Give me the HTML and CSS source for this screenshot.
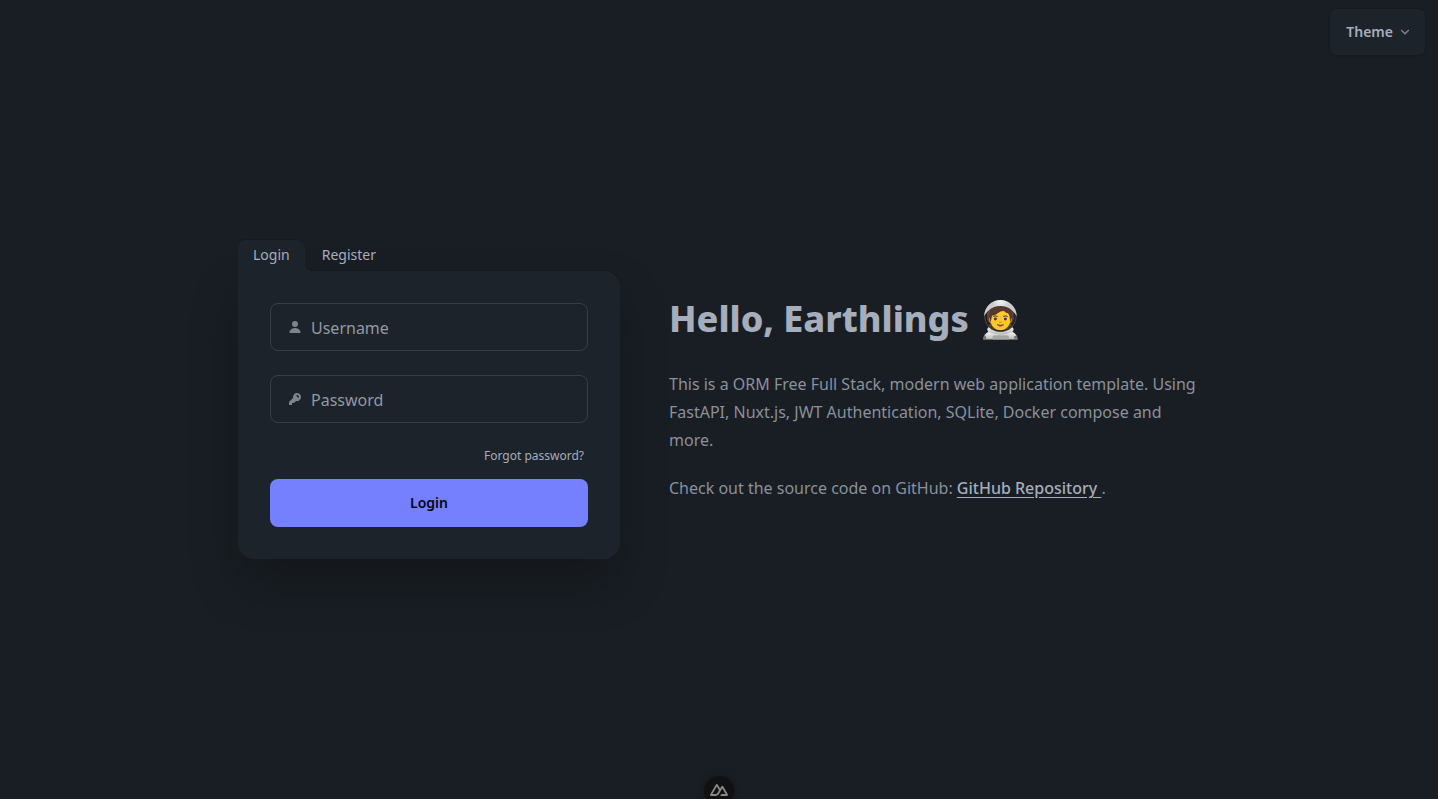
FILE: index.html
```html
<!DOCTYPE html>
<html lang="en">
<head>
<meta charset="utf-8">
<meta name="viewport" content="width=device-width, initial-scale=1">
<title>Login</title>
<link rel="stylesheet" href="styles.css">
</head>
<body>
<header class="topbar">
  <button class="theme-button" type="button">Theme
    <svg class="chevron" viewBox="0 0 12 12" aria-hidden="true"><path d="M2.200 4 6 7.800 9.800 4"/></svg>
  </button>
</header>
<main class="hero">
  <section class="auth">
    <nav class="tabs" role="tablist">
      <button class="tab tab-active" type="button" role="tab" aria-selected="true">Login</button>
      <button class="tab" type="button" role="tab" aria-selected="false">Register</button>
    </nav>
    <form class="card">
      <label class="field">
        <svg class="field-icon" viewBox="0 0 16 16" aria-hidden="true"><path d="M8 8a3 3 0 1 0 0-6 3 3 0 0 0 0 6ZM12.735 14c.618 0 1.093-.561.872-1.139a6.002 6.002 0 0 0-11.215 0c-.22.578.254 1.139.872 1.139h9.470Z"/></svg>
        <input class="field-input" type="text" placeholder="Username" aria-label="Username">
      </label>
      <label class="field">
        <svg class="field-icon" viewBox="0 0 16 16" aria-hidden="true"><path fill-rule="evenodd" clip-rule="evenodd" d="M14 6a4 4 0 0 1-4.899 3.899l-1.955 1.955a.5.5 0 0 1-.353.146H5v1.500a.5.5 0 0 1-.5.5h-2a.5.5 0 0 1-.5-.5v-2.293a.5.5 0 0 1 .146-.353l3.955-3.955A4 4 0 1 1 14 6Zm-4-2a.75.75 0 0 0 0 1.500.5.5 0 0 1 .5.5.75.75 0 0 0 1.500 0 2 2 0 0 0-2-2Z"/></svg>
        <input class="field-input" type="password" placeholder="Password" aria-label="Password">
      </label>
      <a class="forgot" href="#">Forgot password?</a>
      <button class="submit" type="button">Login</button>
    </form>
  </section>
  <article class="intro">
    <h1 class="title">Hello, Earthlings 🧑‍🚀</h1>
    <p class="text">This is a ORM Free Full Stack, modern web application template. Using FastAPI, Nuxt.js, JWT Authentication, SQLite, Docker compose and more.</p>
    <p class="text">Check out the source code on GitHub: <a class="repo" href="#">GitHub Repository&nbsp;</a>.</p>
  </article>
</main>
<button class="devtools" type="button" aria-label="Toggle Nuxt DevTools">
  <svg class="nuxt" viewBox="0 0 324 216" aria-hidden="true"><path d="M181.767 216h120.114c3.815 0 7.563-.988 10.867-2.866a21.440 21.440 0 0 0 7.955-7.831 21.140 21.140 0 0 0-.005-21.389L240.032 46.020a21.430 21.430 0 0 0-7.953-7.829 22.010 22.010 0 0 0-21.729 0 21.420 21.420 0 0 0-7.953 7.829l-20.625 35.334L141.446 12.226a21.460 21.460 0 0 0-7.957-7.830 22.030 22.030 0 0 0-21.732 0 21.460 21.460 0 0 0-7.957 7.830L3.627 183.914a21.130 21.130 0 0 0-.005 21.389 21.440 21.440 0 0 0 7.954 7.831A22.020 22.020 0 0 0 22.443 216h75.397c29.874 0 51.905-13.004 67.064-38.376l36.804-63.171 19.713-33.807 59.164 101.548h-78.877L181.767 216Zm-85.376-33.840-52.620-.012L122.648 46.765l39.357 67.688-26.351 45.245c-10.068 16.463-21.505 22.462-39.263 22.462Z"/></svg>
</button>
</body>
</html>
```
FILE: styles.css
```css
* {
  box-sizing: border-box;
}

body {
  display: flex;
  flex-direction: column;
  min-height: 100vh;
  margin: 0;
  background: #191e24;
  color: #a6adbb;
  font: 16px/24px "Noto Sans", sans-serif;
}

button,
input {
  font: inherit;
  color: inherit;
}

button {
  cursor: pointer;
}

.topbar {
  position: absolute;
  top: 8px;
  right: 12px;
}

.theme-button {
  display: flex;
  align-items: center;
  gap: 6px;
  height: 48px;
  padding: 0 14px 0 16px;
  border: 1px solid #171b21;
  border-radius: 8px;
  background: #1d232a;
  box-shadow: 0 1px 2px rgb(0 0 0 / 5%);
  font-size: 14px;
  font-weight: 600;
}

.chevron {
  width: 12px;
  height: 12px;
  fill: none;
  stroke: #7d838f;
  stroke-width: 1.4;
}

.hero {
  display: flex;
  flex: 1;
  align-items: center;
  justify-content: center;
  gap: 49px;
  padding: 0 16px;
}

.auth {
  flex: 0 1 382px;
  padding-bottom: 1px;
}

.tabs {
  display: flex;
}

.tab {
  position: relative;
  z-index: 1;
  height: 32px;
  padding: 0 16px;
  border: 0;
  background: none;
  font-size: 14px;
  line-height: 20px;
}

.tab-active {
  padding: 0 15px;
  margin-right: 1px;
  border-radius: 8px 8px 0 0;
  background: #1d232a;
  box-shadow: inset 0 1px #161a1f;
}

.tab-active::after {
  content: "";
  position: absolute;
  bottom: 0;
  left: 100%;
  width: 8px;
  height: 8px;
  background: radial-gradient(circle at 100% 0, transparent 7px, #161a1f 7px, #161a1f 8px, #1d232a 8px);
}

.card {
  display: flex;
  flex-direction: column;
  padding: 32px;
  border-radius: 0 16px 16px 16px;
  background: #1d232a;
  box-shadow: 0 -1px #161a1f, 0 25px 50px rgb(0 0 0 / 22%);
}

.field {
  display: flex;
  align-items: center;
  gap: 8px;
  height: 48px;
  margin-bottom: 24px;
  padding: 0 16px;
  border: 1px solid #383e47;
  border-radius: 8px;
}

.field-icon {
  flex: none;
  width: 16px;
  height: 16px;
  fill: #7d838f;
}

.field-input {
  flex: 1;
  min-width: 0;
  padding: 2px 0 0;
  border: 0;
  outline: 0;
  background: none;
}

.field-input::placeholder {
  color: #9299a5;
  opacity: 1;
}

.forgot {
  align-self: flex-end;
  margin-bottom: 14px;
  padding: 0 4px;
  color: #a6adbb;
  font-size: 12px;
  line-height: 18px;
  text-decoration: none;
}

.submit {
  height: 48px;
  border: 0;
  border-radius: 8px;
  background: #7480ff;
  color: #050617;
  font-size: 14px;
  font-weight: 600;
}

.intro {
  flex: 0 1 531px;
  padding-top: 1px;
}

.title {
  margin: 0 0 30px;
  font-size: 36px;
  font-weight: 800;
  line-height: 42px;
}

.text {
  margin: 0 0 20px;
  color: #8a909c;
  line-height: 28px;
}

.text:last-child {
  margin-bottom: 0;
}

.repo {
  color: #a6adbb;
  font-weight: 500;
  text-underline-offset: 3px;
}

.devtools {
  position: fixed;
  bottom: -7px;
  left: 50%;
  display: grid;
  place-items: center;
  width: 30px;
  height: 30px;
  margin-left: -15px;
  padding: 0 0 2px;
  border: 0;
  border-radius: 50%;
  background: #111;
  box-shadow: 0 0 6px rgb(0 0 0 / 30%);
}

.nuxt {
  width: 18px;
  height: 12px;
  fill: #888;
}
```
